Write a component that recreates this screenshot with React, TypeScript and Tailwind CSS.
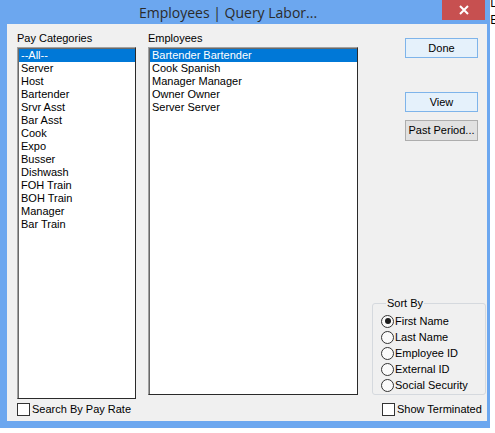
import React from 'react';

const payCategories = [
  '--All--',
  'Server',
  'Host',
  'Bartender',
  'Srvr Asst',
  'Bar Asst',
  'Cook',
  'Expo',
  'Busser',
  'Dishwash',
  'FOH Train',
  'BOH Train',
  'Manager',
  'Bar Train',
];

const employees = ['Bartender Bartender', 'Cook Spanish', 'Manager Manager', 'Owner Owner', 'Server Server'];

const sortOptions = ['First Name', 'Last Name', 'Employee ID', 'External ID', 'Social Security'];

function ListBox({ items, selected, className }: { items: string[]; selected: number; className: string }) {
  return (
    <div
      className={`bg-white border border-[#a0a0a0] border-r-[#2a2a2a] border-b-[#2a2a2a] shadow-[inset_1px_1px_0_#696969] pt-[1px] pl-[1px] ${className}`}
    >
      {items.map((item, i) => (
        <div
          key={item}
          className={`h-[13px] leading-[13px] pl-[2px] whitespace-nowrap ${
            i === selected ? 'bg-[#0078d7] text-white' : 'text-black'
          }`}
        >
          {item}
        </div>
      ))}
    </div>
  );
}

function CheckBox({ label }: { label: string }) {
  return (
    <div className="flex items-center h-[13px] gap-[2px]">
      <span className="w-[13px] h-[13px] border border-[#333] bg-white shrink-0" />
      <span className="leading-[13px] text-black whitespace-nowrap">{label}</span>
    </div>
  );
}

function Radio({ label, checked }: { label: string; checked?: boolean }) {
  return (
    <div className="flex items-center h-[16px] gap-[1px]">
      <span className="w-[13px] h-[13px] rounded-full border border-[#333] bg-[#fafafa] flex items-center justify-center shrink-0">
        {checked && <span className="w-[6px] h-[6px] rounded-full bg-[#1c1c1c]" />}
      </span>
      <span className="leading-[13px] text-black whitespace-nowrap">{label}</span>
    </div>
  );
}

export default function App() {
  return (
    <div
      className="w-[495px] h-[433px] bg-white flex overflow-hidden text-[11px]"
      style={{ fontFamily: '"Liberation Sans", Arial, sans-serif' }}
    >
      {/* window frame */}
      <div className="w-[490px] h-[428px] bg-[#6ca7ef] flex flex-col pl-[7px] pr-[3px] pb-[7px] shrink-0">
        {/* title bar */}
        <div className="h-[24px] relative flex justify-center pt-[3px] pr-[34px] -ml-[7px] -mr-[3px]">
          <span
            className="text-[14px] leading-[20px] text-[#2b2b2b]"
            style={{ fontFamily: '"Open Sans", "Noto Sans", sans-serif' }}
          >
            Employees | Query Labor...
          </span>
          <div className="absolute top-0 right-[5px] w-[43px] h-[20px] bg-[#c75050] flex items-center justify-center">
            <svg width="10" height="10" viewBox="0 0 10 10">
              <path d="M1 1 L9 9 M9 1 L1 9" stroke="white" strokeWidth="2" />
            </svg>
          </div>
        </div>

        {/* client area */}
        <div className="flex-1 bg-[#f0f0f0] flex pt-[8px] pb-[5px] pl-[10px]">
          {/* pay categories */}
          <div className="w-[119px] flex flex-col">
            <div className="h-[15px] leading-[13px] text-black">Pay Categories</div>
            <ListBox items={payCategories} selected={0} className="flex-1" />
            <div className="mt-[4px]">
              <CheckBox label="Search By Pay Rate" />
            </div>
          </div>

          {/* employees */}
          <div className="w-[210px] ml-[12px] flex flex-col pb-[21px]">
            <div className="h-[15px] leading-[13px] text-black">Employees</div>
            <ListBox items={employees} selected={0} className="flex-1" />
          </div>

          {/* buttons & sort */}
          <div className="flex-1 ml-[14px] flex flex-col">
            <button className="ml-[33px] mt-[6px] w-[73px] h-[20px] bg-[#e5f1fb] border border-[#7eb4ea] text-black leading-[13px]">
              Done
            </button>
            <button className="ml-[33px] mt-[34px] w-[73px] h-[20px] bg-[#e5f1fb] border border-[#7eb4ea] text-black leading-[13px]">
              View
            </button>
            <button className="ml-[33px] mt-[8px] w-[73px] h-[21px] bg-[#e1e1e1] border border-[#adadad] text-black leading-[13px]">
              Past Period...
            </button>
            <div className="flex-1" />
            <fieldset className="mr-[1px] border border-[#d5d9de] rounded-[3px] pl-[8px] pt-[3px] pb-[1px]">
              <legend className="ml-[5px] px-[1px] leading-[13px] text-black">Sort By</legend>
              {sortOptions.map((opt, i) => (
                <Radio key={opt} label={opt} checked={i === 0} />
              ))}
            </fieldset>
            <div className="mt-[8px] ml-[10px]">
              <CheckBox label="Show Terminated" />
            </div>
          </div>
        </div>
      </div>

      {/* window behind */}
      <div
        className="w-[5px] overflow-hidden text-[13px] leading-[17px] text-black -mt-[6px]"
        style={{ fontFamily: '"Open Sans", sans-serif' }}
      >
        <div>D</div>
        <div>E</div>
      </div>
    </div>
  );
}
